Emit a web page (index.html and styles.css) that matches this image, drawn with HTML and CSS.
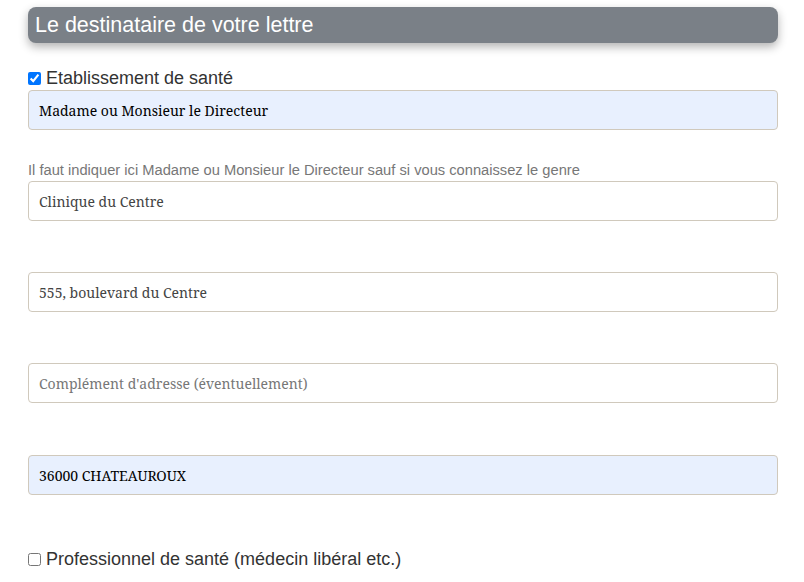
FILE: index.html
```html
<!DOCTYPE html>
<html lang="fr">
<head>
<meta charset="utf-8">
<link rel="stylesheet" href="styles.css">
</head>
<body>
<div class="form">
  <div class="title">Le destinataire de votre lettre</div>
  <label class="check"><input type="checkbox" checked> Etablissement de santé</label>
  <input class="field autofill" type="text" value="Madame ou Monsieur le Directeur">
  <div class="help">Il faut indiquer ici Madame ou Monsieur le Directeur sauf si vous connaissez le genre</div>
  <input class="field" type="text" value="Clinique du Centre">
  <div class="help"></div>
  <input class="field" type="text" value="555, boulevard du Centre">
  <div class="help"></div>
  <input class="field" type="text" placeholder="Complément d'adresse (éventuellement)">
  <div class="help gap"></div>
  <input class="field autofill" type="text" value="36000 CHATEAUROUX">
  <label class="check last"><input type="checkbox"> Professionnel de santé (médecin libéral etc.)</label>
</div>
</body>
</html>
```
FILE: styles.css
```css
html, body {
  margin: 0;
  padding: 0;
  background: #fff;
}
body {
  font-family: "Liberation Sans", Arial, sans-serif;
}
.form {
  display: flex;
  flex-direction: column;
  padding: 7px 26px 0 28px;
}
.title {
  height: 36px;
  line-height: 36px;
  background: #7a8087;
  color: #fff;
  font-size: 21.5px;
  padding: 0 7px;
  border-radius: 8px;
  box-shadow: 0 4px 10px rgba(0,0,0,0.3);
}
.check {
  display: flex;
  align-items: center;
  font-size: 18px;
  color: #333;
  height: 22px;
  margin-top: 24px;
}
.check input {
  margin: 0 5px 0 0;
  width: 13px;
  height: 13px;
}
.check.last {
  margin-top: 53px;
}
.field {
  box-sizing: border-box;
  height: 40px;
  width: 100%;
  margin: 1px 0 0;
  border: 1px solid #d0c9bc;
  border-radius: 4px;
  padding: 0 10px;
  font-family: "Noto Serif", "DejaVu Serif", serif;
  font-size: 14px;
  color: #444;
  background: #fff;
  outline: none;
}
.field::placeholder {
  color: #777;
}
.field.autofill {
  background: #e8f0fe;
  color: #000;
}
.help {
  margin-top: 30px;
  height: 20px;
  line-height: 20px;
  font-size: 14.7px;
  color: #777;
}
.help.gap {
  margin-top: 31px;
}
```
